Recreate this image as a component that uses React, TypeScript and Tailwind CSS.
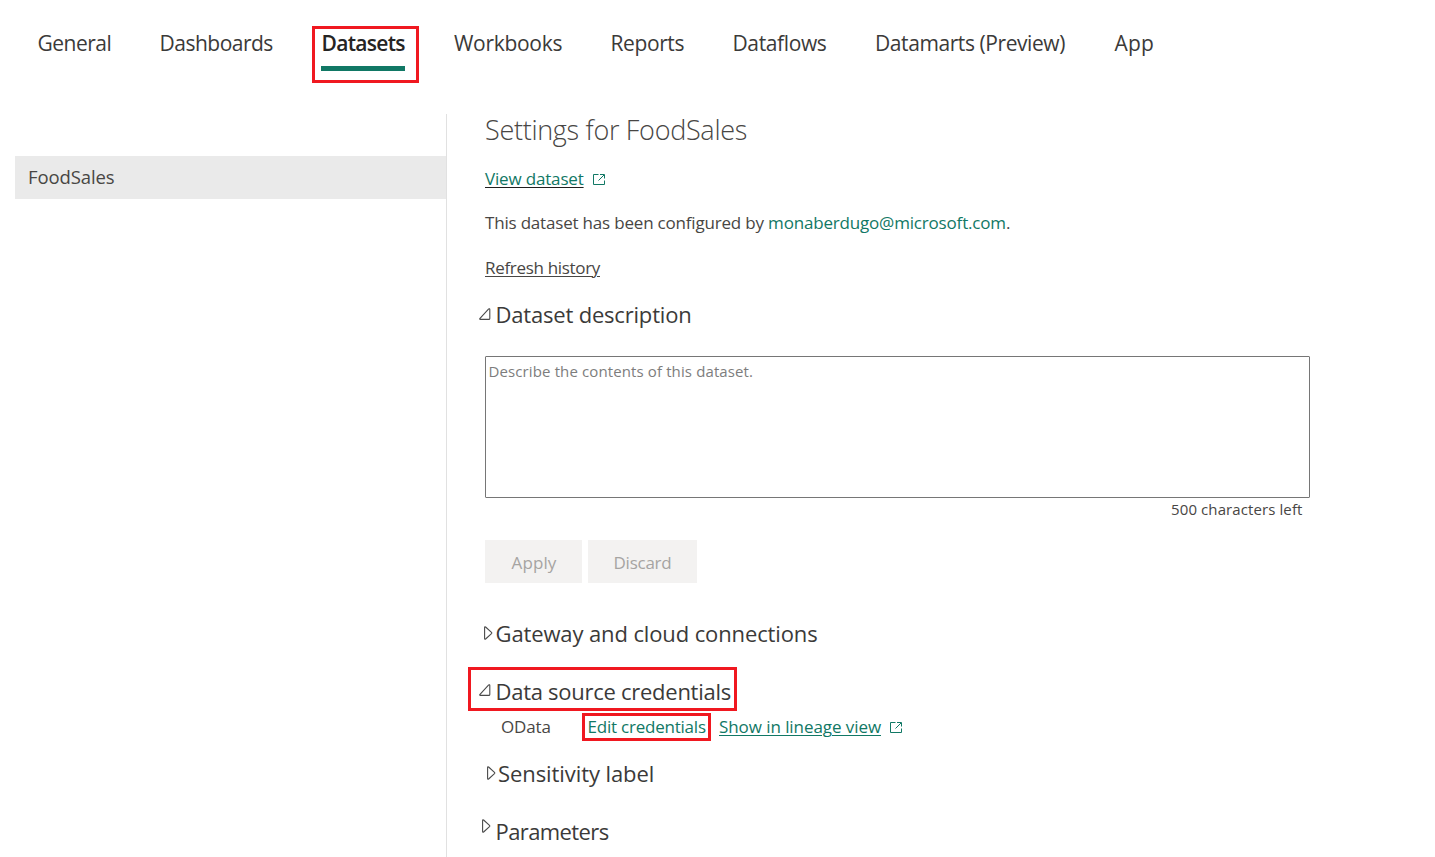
import type { ReactNode } from "react";

const tabs = [
  { label: "General", cls: "w-[75px] ml-[37.5px] tracking-[-0.5px]" },
  { label: "Dashboards", cls: "w-[114px] ml-[47px] tracking-[-0.5px]" },
  { label: "Datasets", cls: "", active: true },
  { label: "Workbooks", cls: "w-[110px] ml-[35px] tracking-[-0.3px]" },
  { label: "Reports", cls: "w-[75px] ml-[46.5px] tracking-[-0.4px]" },
  { label: "Dataflows", cls: "w-[96px] ml-[47px] tracking-[-0.38px]" },
  { label: "Datamarts (Preview)", cls: "w-[193px] ml-[46.5px] tracking-[-0.42px]" },
  { label: "App", cls: "w-[42px] ml-[46.5px] tracking-[0.2px]" },
];

function ExternalIcon() {
  return (
    <svg className="h-3 w-3 shrink-0 text-[#117865]" viewBox="0 0 12 12" fill="none" stroke="currentColor">
      <path d="M5.5 1.5H0.5V11.5H11.5V7.5" />
      <path d="M7 1.5H11.5V5.5M11 2L5.5 7.5" />
    </svg>
  );
}

function OpenTriangle() {
  return (
    <svg className="h-3 w-3 shrink-0" viewBox="0 0 12 12" fill="none" stroke="#4a4a4a" strokeWidth="1.1" strokeLinejoin="round">
      <path d="M9.7 0.9Q10.8 0.4 10.8 1.6V10.4Q10.8 11.4 9.8 11.4H1.4Q0.2 11.4 1 10.4Z" />
    </svg>
  );
}

function ClosedTriangle() {
  return (
    <svg className="h-[14px] w-[9px] shrink-0" viewBox="0 0 9 14" fill="none" stroke="#4a4a4a" strokeWidth="1.1" strokeLinejoin="round">
      <path d="M0.6 1.4Q0.6 0.2 1.6 1L7.5 6.4Q8.1 7 7.5 7.6L1.6 13Q0.6 13.8 0.6 12.6Z" />
    </svg>
  );
}

function Heading({ icon, children, className }: { icon: ReactNode; children: ReactNode; className: string }) {
  return (
    <h2 className={`flex h-[29px] shrink-0 text-[22px] leading-[29px] text-[#3b3a39] ${className}`}>
      {icon}
      {children}
    </h2>
  );
}

export default function App() {
  return (
    <div className="flex h-[857px] w-[1435px] flex-col overflow-hidden bg-white font-['Open_Sans',sans-serif] font-normal whitespace-nowrap text-[#484644]">
      <nav className="flex h-[114px] shrink-0 items-start pt-[26px] text-[21px] leading-[30px] text-[#3b3a39]">
        {tabs.map((t) =>
          t.active ? (
            <div key={t.label} className="ml-[38.5px] h-[57px] w-[107px] border-3 border-[#f01820] px-[6px]">
              <div className="-mt-px h-[43px] w-[84px] border-b-5 border-[#117865] pl-[0.5px] font-semibold tracking-[-0.7px] text-[#252423]">
                {t.label}
              </div>
            </div>
          ) : (
            <a key={t.label} className={`mt-[2px] ${t.cls}`}>
              {t.label}
            </a>
          ),
        )}
      </nav>

      <div className="flex min-h-0 flex-1">
        <aside className="w-[447px] shrink-0 border-r border-[#e1e1e1] pt-[42px] pl-[15px]">
          <div className="h-[43px] bg-[#eaeaea] pl-[13px] text-[18.5px] leading-[42px] tracking-[-0.1px]">FoodSales</div>
        </aside>

        <main className="flex flex-1 flex-col pt-px pl-[38px] text-[17px] leading-[24px]">
          <h1 className="h-[30px] shrink-0 text-[27px] leading-[30px] font-light tracking-[-0.3px]">Settings for FoodSales</h1>

          <div className="mt-[22px] flex h-6 shrink-0 items-center">
            <a className="tracking-[-0.17px] text-[#117865] underline decoration-[#201f1e] decoration-1 underline-offset-2">View dataset</a>
            <span className="ml-[9px]"><ExternalIcon /></span>
          </div>

          <p className="mt-5 h-6 shrink-0 tracking-[-0.19px]">
            This dataset has been configured by <a className="tracking-[-0.18px] text-[#117865]">monaberdugo@microsoft.com</a>.
          </p>
          <p className="mt-[21px] h-6 shrink-0 tracking-[-0.32px] underline decoration-1 underline-offset-2">Refresh history</p>

          <Heading className="mt-[20px] -ml-[6px] tracking-[-0.19px]" icon={<span className="mt-2 mr-[4.5px]"><OpenTriangle /></span>}>
            Dataset description
          </Heading>

          <textarea
            className="mt-[27px] h-[142px] w-[825px] shrink-0 resize-none rounded-[1px] border border-[#767676] px-[2.5px] py-1 text-[15px] leading-[21px] tracking-[0.12px] placeholder:text-[#7d7d7d]"
            placeholder="Describe the contents of this dataset."
          />
          <p className="mt-px h-5 w-[817.5px] shrink-0 text-right text-[15px] leading-5 tracking-[0.1px]">500 characters left</p>

          <div className="mt-[21px] flex h-[43px] shrink-0 gap-[6px] text-[#a6a4a2]">
            <button className="w-[97px] bg-[#f3f2f1] pt-[2px] pl-px tracking-[0.1px]">Apply</button>
            <button className="w-[109px] bg-[#f3f2f1] pt-[2px] tracking-[-0.25px]">Discard</button>
          </div>

          <Heading className="mt-9 -ml-[1.5px] tracking-[-0.12px]" icon={<span className="mt-[7px] mr-[3px]"><ClosedTriangle /></span>}>
            Gateway and cloud connections
          </Heading>

          <div className="mt-[19px] -ml-[17px] h-[44px] w-[269px] shrink-0 border-3 border-[#f01820] pt-[7px] pl-2">
            <Heading className="tracking-[-0.27px]" icon={<span className="mt-[7px] mr-[4.5px]"><OpenTriangle /></span>}>
              Data source credentials
            </Heading>
          </div>

          <div className="mt-[2px] ml-4 flex h-7 shrink-0 items-center">
            <span className="w-[81px] tracking-[-0.15px]">OData</span>
            <span className="h-7 w-[129px] border-3 border-[#f01820] pl-[2.5px] leading-[21px] tracking-[-0.22px] text-[#117865]">Edit credentials</span>
            <a className="ml-2 tracking-[-0.07px] text-[#117865] underline decoration-1 underline-offset-2">Show in lineage view</a>
            <span className="ml-[9px]"><ExternalIcon /></span>
          </div>

          <Heading className="mt-[18px] ml-[1.5px] tracking-[-0.08px]" icon={<span className="mt-[7px] mr-[2.5px]"><ClosedTriangle /></span>}>
            Sensitivity label
          </Heading>
          <Heading className="mt-[29px] -ml-[3.5px] tracking-[-0.6px]" icon={<span className="mt-[2px] mr-[5px]"><ClosedTriangle /></span>}>
            Parameters
          </Heading>
        </main>
      </div>
    </div>
  );
}
